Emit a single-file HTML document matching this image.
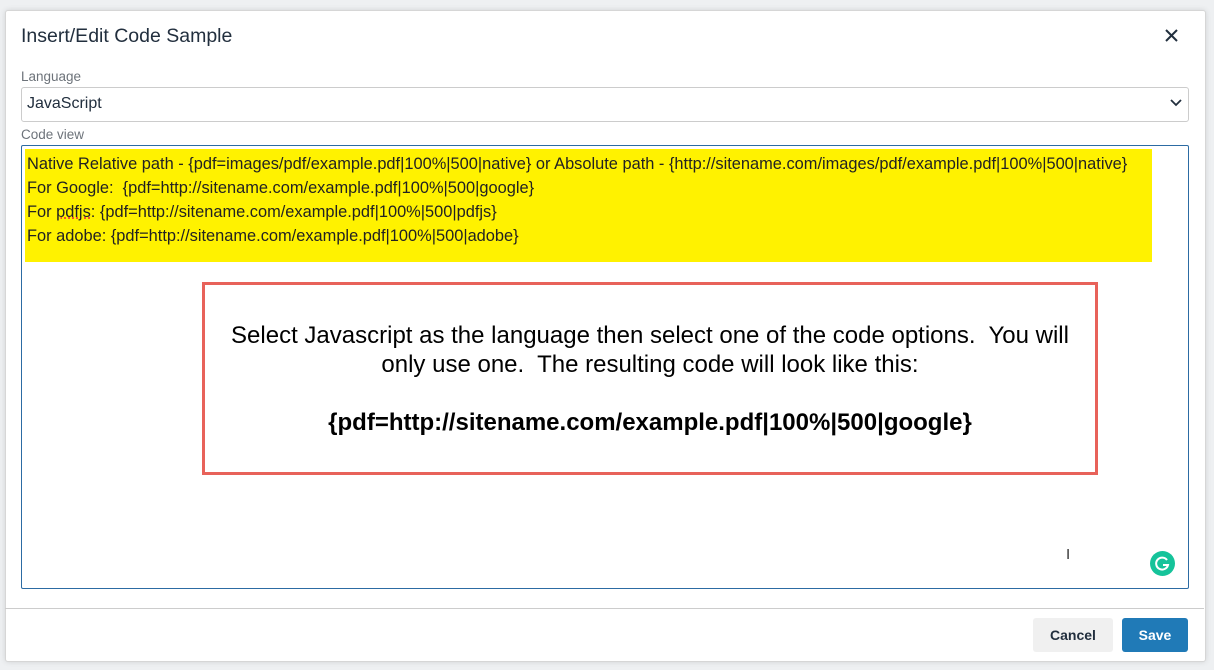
<!DOCTYPE html>
<html><head><style>
body{margin:0;width:1214px;height:670px;background:#eef0f2;font-family:"Liberation Sans",sans-serif;position:relative;overflow:hidden}
.dlg{position:absolute;left:5px;top:10px;width:1199px;height:650px;background:#fff;border:1px solid #d6d6d6;border-radius:3px;box-shadow:0 0 6px rgba(0,0,0,.12)}
.a{position:absolute}
</style></head><body>
<div class="dlg"></div>
<div class="a" style="left:21px;top:25px;font-size:19.5px;color:#222f3e">Insert/Edit Code Sample</div>
<svg class="a" style="left:1165px;top:29px" width="13" height="13"><path d="M1 1l11 11M12 1L1 12" stroke="#222f3e" stroke-width="2"/></svg>
<div class="a" style="left:21px;top:69px;font-size:13.5px;color:#6d737a">Language</div>
<div class="a" style="left:21px;top:87px;width:1166px;height:33px;border:1px solid #ccc;border-radius:3px"></div>
<div class="a" style="left:27px;top:95px;font-size:16px;color:#222f3e">JavaScript</div>
<svg class="a" style="left:1170px;top:98px" width="12" height="10"><path d="M1 2l5 5 5-5" stroke="#222f3e" stroke-width="1.8" fill="none"/></svg>
<div class="a" style="left:21px;top:127px;font-size:13.5px;color:#6d737a">Code view</div>
<div class="a" style="left:21px;top:145px;width:1166px;height:442px;border:1px solid #2c6ba3;border-radius:2px"></div>
<div class="a" style="left:25px;top:149px;width:1127px;height:113px;background:#fff200"></div>
<div class="a" style="left:27px;top:152px;font-size:16.4px;line-height:24px;color:#222;white-space:pre">Native Relative path - {pdf=images/pdf/example.pdf|100%|500|native} or Absolute path - {http://sitename.com/images/pdf/example.pdf|100%|500|native}
For Google:  {pdf=http://sitename.com/example.pdf|100%|500|google}
For <span style="text-decoration:underline dotted #e33">pdfjs</span>: {pdf=http://sitename.com/example.pdf|100%|500|pdfjs}
For adobe: {pdf=http://sitename.com/example.pdf|100%|500|adobe}</div>
<div class="a" style="left:202px;top:282px;width:890px;height:187px;border:3px solid #e8625a"></div>
<div class="a" style="left:205px;top:321px;width:890px;text-align:center;font-size:24px;line-height:29px;color:#000">Select Javascript as the language then select one of the code options.&nbsp; You will<br>only use one.&nbsp; The resulting code will look like this:<br><br><b>{pdf=http://sitename.com/example.pdf|100%|500|google}</b></div>
<div class="a" style="left:1066px;top:546px;font-size:15px;color:#333">I</div>
<div class="a" style="left:1150px;top:551px;width:25px;height:25px;border-radius:50%;background:#15c39a"></div>
<svg class="a" style="left:1150px;top:551px" width="25" height="25"><path d="M17 9a6 6 0 1 0 1 5h-5" stroke="#fff" stroke-width="2" fill="none"/></svg>
<div class="a" style="left:5px;top:608px;width:1199px;height:1px;background:#ccc"></div>
<div class="a" style="left:1033px;top:618px;width:80px;height:34px;background:#f0f0f0;border-radius:3px;font-size:14px;font-weight:bold;color:#222f3e;text-align:center;line-height:34px">Cancel</div>
<div class="a" style="left:1122px;top:618px;width:66px;height:34px;background:#207ab7;border-radius:3px;font-size:14px;font-weight:bold;color:#fff;text-align:center;line-height:34px">Save</div>
</body></html>
